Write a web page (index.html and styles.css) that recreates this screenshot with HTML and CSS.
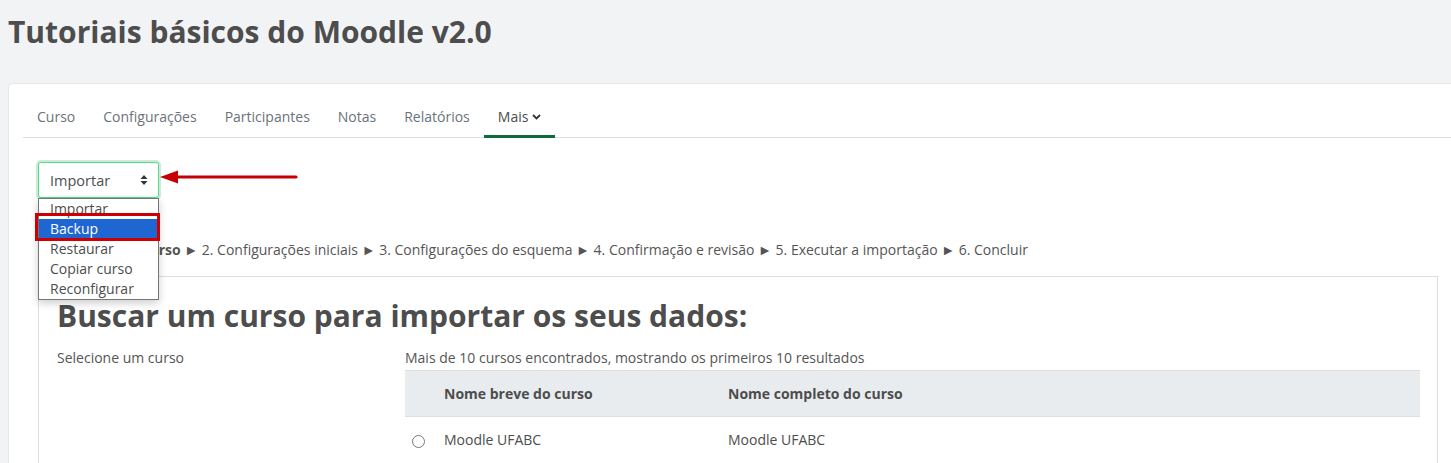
FILE: index.html
```html
<!DOCTYPE html>
<html lang="pt">
<head>
<meta charset="utf-8">
<title>Tutoriais básicos do Moodle v2.0</title>
<link rel="stylesheet" href="styles.css">
</head>
<body>
<header class="page-header">
  <h1 class="page-title">Tutoriais básicos do Moodle v2.0</h1>
</header>
<main class="card">
  <nav class="tabs">
    <a class="tab">Curso</a>
    <a class="tab">Configurações</a>
    <a class="tab">Participantes</a>
    <a class="tab">Notas</a>
    <a class="tab">Relatórios</a>
    <a class="tab active">Mais <svg class="chev" width="9" height="6" viewBox="0 0 9 6"><path d="M1 1l3.5 3.5L8 1" fill="none" stroke="#333" stroke-width="1.8"/></svg></a>
  </nav>
  <div class="content">
    <div class="select-wrap">
      <div class="select">
        <span>Importar</span>
        <svg class="updown" width="8" height="12" viewBox="0 0 8 12"><path d="M4 1L7.5 5H0.5Z M4 11L7.5 7H0.5Z" fill="#333"/></svg>
      </div>
      <ul class="dropdown">
        <li>Importar</li>
        <li class="selected">Backup</li>
        <li>Restaurar</li>
        <li>Copiar curso</li>
        <li>Reconfigurar</li>
      </ul>
      <div class="mark"></div>
      <svg class="arrow" width="140" height="20" viewBox="0 0 140 20"><path d="M16 10H136" stroke="#c40000" stroke-width="3.2" stroke-linecap="round"/><path d="M0 10L18 3.5V16.5Z" fill="#c40000"/></svg>
    </div>
    <p class="stages"><b>1. Selecionar o curso</b> ► 2. Configurações iniciais ► 3. Configurações do esquema ► 4. Confirmação e revisão ► 5. Executar a importação ► 6. Concluir</p>
    <section class="box">
      <h2 class="box-title">Buscar um curso para importar os seus dados:</h2>
      <div class="form-row">
        <div class="label">Selecione um curso</div>
        <div class="field">
          <div class="count">Mais de 10 cursos encontrados, mostrando os primeiros 10 resultados</div>
          <table class="results">
            <thead>
              <tr><th class="c0"></th><th class="c1">Nome breve do curso</th><th>Nome completo do curso</th></tr>
            </thead>
            <tbody>
              <tr><td class="c0"><span class="radio"></span></td><td class="c1">Moodle UFABC</td><td>Moodle UFABC</td></tr>
            </tbody>
          </table>
        </div>
      </div>
    </section>
  </div>
</main>
</body>
</html>
```
FILE: styles.css
```css
* { box-sizing: border-box; }
html, body { margin: 0; padding: 0; }
body {
  background: #f2f3f5;
  font-family: "Open Sans", "Liberation Sans", sans-serif;
  color: #4d4d4d;
  font-size: 14px;
  overflow: hidden;
}
.page-header { padding: 14px 8px 0; height: 83px; }
.page-title {
  margin: 0;
  font-size: 30px;
  line-height: 36px;
  font-weight: 700;
  color: #4d4d4d;
}
.card {
  background: #fff;
  margin-left: 8px;
  margin-right: -20px;
  border: 1px solid #e6e6e6;
  border-radius: 4px 0 0 0;
  padding: 15px 0 0 14px;
  min-height: 400px;
}
.tabs {
  display: flex;
  border-bottom: 1px solid #dedede;
  height: 39px;
}
.tab {
  display: flex;
  align-items: center;
  gap: 4px;
  padding: 0 14px 2px;
  color: #6a737b;
  font-size: 14px;
  border-bottom: 3px solid transparent;
  margin-bottom: -1px;
}
.tab.active { color: #4d4d4d; border-bottom-color: #0f6b3a; }
.chev { margin-top: 1px; }
.content { padding: 24px 15px 0 15px; }
.select-wrap { position: relative; height: 37px; }
.select {
  width: 121px;
  height: 36px;
  border: 1px solid #4ddf8a;
  border-radius: 3px;
  box-shadow: 0 0 0 2px #cde9d8;
  display: flex;
  align-items: center;
  justify-content: space-between;
  padding: 0 10px 0 11px;
  font-size: 14.5px;
  color: #4d4d4d;
  background: #fff;
}
.dropdown {
  position: absolute;
  left: 0;
  top: 36px;
  width: 121px;
  margin: 0;
  padding: 0;
  list-style: none;
  background: #fff;
  border: 1px solid #767676;
  box-shadow: 0 3px 8px rgba(0,0,0,0.2);
  z-index: 5;
}
.dropdown li {
  height: 20px;
  line-height: 19px;
  padding-left: 11px;
  font-size: 14px;
  color: #4d4d4d;
}
.dropdown li.selected { background: #1e66d1; color: #fff; }
.mark {
  position: absolute;
  left: -3px;
  top: 51px;
  width: 125px;
  height: 28px;
  border: 3px solid #cc0000;
  z-index: 6;
}
.arrow { position: absolute; left: 122px; top: 5px; }
.stages {
  margin: 41px 0 0;
  line-height: 20px;
  font-size: 14px;
  color: #555;
}
.stages b { font-weight: 700; }
.box {
  margin-top: 16px;
  border: 1px solid #dedede;
  padding: 19px 18px 0;
  min-height: 200px;
  margin-right: 17px;
}
.box-title {
  margin: 0 0 12px;
  font-size: 30px;
  line-height: 40px;
  font-weight: 700;
  color: #4d4d4d;
}
.form-row { display: grid; grid-template-columns: 348px 1fr; }
.label, .count { font-size: 14px; line-height: 20px; color: #555; }
.count { margin-bottom: 2px; }
.results { border-collapse: collapse; width: 1015px; }
.results th {
  background: #e9ecef;
  height: 46px;
  text-align: left;
  font-weight: 700;
  font-size: 14px;
  color: #4d4d4d;
  border-top: 1px solid #dedede;
  border-bottom: 1px solid #dedede;
  padding: 0;
}
.results td { height: 46px; padding: 0; font-size: 14px; color: #4d4d4d; }
.c0 { width: 39px; padding-left: 7px !important; }
.c1 { width: 284px; }
.radio {
  display: inline-block;
  width: 13px;
  height: 13px;
  border: 1px solid #777;
  border-radius: 50%;
  margin-left: 0;
  vertical-align: middle;
}
```
